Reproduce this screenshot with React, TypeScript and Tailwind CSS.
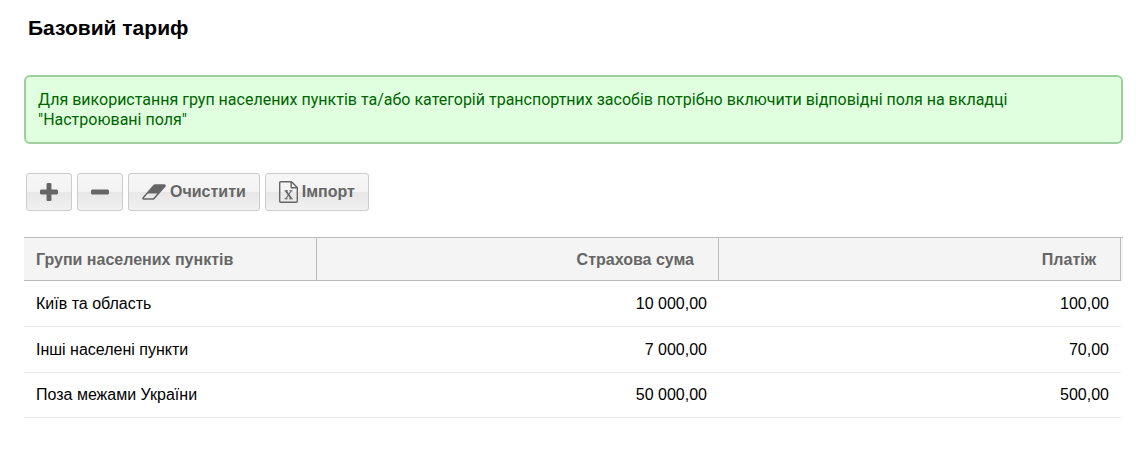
import type { ReactNode } from "react";

type Tariff = {
  group: string;
  sum: string;
  payment: string;
};

const tariffs: Tariff[] = [
  { group: "Київ та область", sum: "10 000,00", payment: "100,00" },
  { group: "Інші населені пункти", sum: "7 000,00", payment: "70,00" },
  { group: "Поза межами України", sum: "50 000,00", payment: "500,00" },
];

type ButtonProps = {
  label?: string;
  title: string;
  children: ReactNode;
};

function ToolbarButton({ label, title, children }: ButtonProps) {
  return (
    <button
      type="button"
      aria-label={title}
      className="flex h-[38px] items-center gap-1 rounded-[3px] border border-[#ccc] bg-[linear-gradient(#f6f6f6_0%,#f3f3f3_50%,#e7e7e7_50%,#f1f1f1_100%)] px-[13px] text-base font-bold text-[#666]"
    >
      {children}
      {label ? <span>{label}</span> : null}
    </button>
  );
}

function PlusIcon() {
  return (
    <svg viewBox="192 128 1408 1408" className="size-[18px]" fill="currentColor">
      <path d="M1600 736v192q0 40-28 68t-68 28h-416v416q0 40-28 68t-68 28h-192q-40 0-68-28t-28-68v-416h-416q-40 0-68-28t-28-68v-192q0-40 28-68t68-28h416v-416q0-40 28-68t68-28h192q40 0 68 28t28 68v416h416q40 0 68 28t28 68z" />
    </svg>
  );
}

function MinusIcon() {
  return (
    <svg viewBox="192 128 1408 1408" className="size-[18px]" fill="currentColor">
      <path d="M1600 736v192q0 40-28 68t-68 28h-1216q-40 0-68-28t-28-68v-192q0-40 28-68t68-28h1216q40 0 68 28t28 68z" />
    </svg>
  );
}

function EraserIcon() {
  return (
    <svg viewBox="64 0 1920 1792" className="h-[22px] w-6" fill="currentColor">
      <path d="M960 1408l336-384h-768l-336 384h768zm1013-1077q15 34 9.5 71.5t-30.5 65.5l-896 1024q-38 44-96 44h-768q-38 0-69.5-20.5t-47.5-54.5q-15-34-9.5-71.5t30.5-65.5l896-1024q38-44 96-44h768q38 0 69.5 20.5t47.5 54.5z" />
    </svg>
  );
}

function ExcelIcon() {
  return (
    <svg
      viewBox="0 0 19 22"
      className="h-[22px] w-[19px]"
      fill="none"
      stroke="currentColor"
      strokeWidth="1.4"
      strokeLinejoin="round"
    >
      <path d="M12.5 .7H1.7Q.7 .7 .7 1.7V20.3Q.7 21.3 1.7 21.3H17.3Q18.3 21.3 18.3 20.3V6.5Z" />
      <path d="M12.2 .8V6.8H18.2" />
      <path d="M6.8 9.8L12.4 17.8" strokeWidth="1.8" />
      <path d="M12.2 9.8L6.8 17.8" strokeWidth="1.1" />
      <path d="M5.5 9.8H9M10.5 9.8H13.5M5.5 17.8H8.7M10.2 17.8H13.8" strokeWidth="1" />
    </svg>
  );
}

function TariffTable() {
  return (
    <div className="mt-[26px] bg-[linear-gradient(#bbb_1px,#f4f4f4_1px,#f4f4f4_44px,transparent_44px)] pr-0.5">
      <table className="w-full table-fixed border-separate border-spacing-0 bg-white">
        <thead>
          <tr className="h-11 bg-[#f4f4f4] text-[#666]">
            <th className="w-[293px] border-y border-r border-[#bbb] px-3 pt-0.5 text-left">
              Групи населених пунктів
            </th>
            <th className="border-y border-r border-[#bbb] px-6 pt-0.5 text-right">
              Страхова сума
            </th>
            <th className="border-y border-r border-[#bbb] px-6 pt-0.5 text-right">
              Платіж
            </th>
          </tr>
        </thead>
        <tbody>
          {tariffs.map((tariff) => (
            <tr key={tariff.group} className="h-[46px] last:h-[45px]">
              <td className="border-b border-[#ebebeb] px-3">{tariff.group}</td>
              <td className="border-b border-[#ebebeb] px-3 text-right">
                {tariff.sum}
              </td>
              <td className="border-b border-[#ebebeb] px-3 text-right">
                {tariff.payment}
              </td>
            </tr>
          ))}
        </tbody>
      </table>
    </div>
  );
}

function App() {
  return (
    <main className="bg-white pt-4 pr-4 pb-8 pl-6 font-['Liberation_Sans',Arial,sans-serif] text-base text-black">
      <h1 className="px-1 text-[21px] leading-6 font-bold">Базовий тариф</h1>
      <p className="mt-[35px] rounded-md border-2 border-[#9fcf9f] bg-[#dfffdf] px-3 pt-[13px] pb-3 font-['Roboto',sans-serif] leading-5 text-[#006400]">
        Для використання груп населених пунктів та/або категорій транспортних
        засобів потрібно включити відповідні поля на вкладці "Настроювані поля"
      </p>
      <div className="mt-[29px] flex gap-[5px] px-0.5">
        <ToolbarButton title="Додати">
          <PlusIcon />
        </ToolbarButton>
        <ToolbarButton title="Видалити">
          <MinusIcon />
        </ToolbarButton>
        <ToolbarButton title="Очистити" label="Очистити">
          <EraserIcon />
        </ToolbarButton>
        <ToolbarButton title="Імпорт" label="Імпорт">
          <ExcelIcon />
        </ToolbarButton>
      </div>
      <TariffTable />
    </main>
  );
}

export default App;
